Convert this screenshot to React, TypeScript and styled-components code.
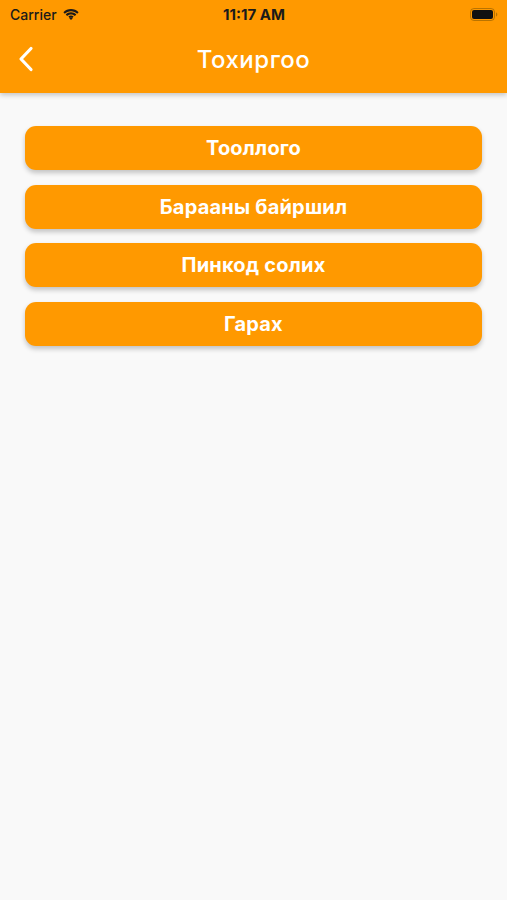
import React from "react";
import styled, { createGlobalStyle } from "styled-components";

const Global = createGlobalStyle`
  html, body { margin: 0; padding: 0; background: #f9f9f9; }
  body { font-family: "Inter", "Liberation Sans", sans-serif; }
`;

const Page = styled.div`
  width: 507px;
  min-height: 900px;
  background: #f9f9f9;
  display: flex;
  flex-direction: column;
`;

const Header = styled.header`
  background: #ff9900;
  height: 93px;
  box-shadow: 0 2px 5px rgba(0, 0, 0, 0.22);
  display: flex;
  flex-direction: column;
  position: relative;
  z-index: 1;
`;

const StatusBar = styled.div`
  height: 28px;
  display: grid;
  grid-template-columns: 1fr auto 1fr;
  align-items: center;
  padding: 0 9px 0 10px;
  color: #1a1a1a;
  font-size: 14px;
`;

const Carrier = styled.div`
  display: flex;
  align-items: center;
  gap: 5px;
  font-weight: 500;
`;

const Time = styled.div`
  font-weight: 700;
  font-size: 15px;
`;

const Right = styled.div`
  display: flex;
  justify-content: flex-end;
`;

const NavBar = styled.div`
  flex: 1;
  display: flex;
  align-items: center;
  justify-content: center;
  position: relative;
  padding-bottom: 3px;
`;

const BackButton = styled.div`
  position: absolute;
  left: 18px;
  top: 17px;
  width: 20px;
  height: 28px;
  display: flex;
  align-items: center;
`;

const Title = styled.h1`
  margin: 0;
  color: #ffffff;
  font-size: 24px;
  font-weight: 500;
  letter-spacing: 0.5px;
`;

const List = styled.main`
  display: flex;
  flex-direction: column;
  gap: 14.5px;
  padding: 33px 25px 0 25px;
`;

const MenuButton = styled.button`
  height: 44px;
  border: none;
  border-radius: 11px;
  background: #ff9900;
  color: #ffffff;
  font-family: "Inter", "Liberation Sans", sans-serif;
  font-size: 20px;
  font-weight: 700;
  letter-spacing: 0.2px;
  box-shadow: 0 3px 5px rgba(0, 0, 0, 0.22);
  display: flex;
  align-items: center;
  justify-content: center;
  padding: 0;
  cursor: pointer;
`;

const Wifi = () => (
  <svg width="18" height="13" viewBox="0 0 17 13">
    <path d="M8.5 3.2c2.4 0 4.6.9 6.2 2.5l1.4-1.5C14.1 2.2 11.4 1 8.5 1S2.9 2.2.9 4.2l1.4 1.5C3.9 4.1 6.1 3.2 8.5 3.2z" fill="#1a1a1a" />
    <path d="M8.5 6.4c1.5 0 2.9.6 3.9 1.6l1.4-1.5C12.4 5.1 10.5 4.3 8.5 4.3S4.6 5.1 3.2 6.5L4.6 8c1-1 2.4-1.6 3.9-1.6z" fill="#1a1a1a" />
    <path d="M8.5 9.5c.7 0 1.3.3 1.7.7L8.5 12 6.8 10.2c.4-.4 1-.7 1.7-.7z" fill="#1a1a1a" />
    <path d="M8.5 7.5c1 0 1.9.4 2.6 1.1l-1.3 1.4c-.3-.4-.8-.6-1.3-.6s-1 .2-1.3.6L5.9 8.6c.7-.7 1.6-1.1 2.6-1.1z" fill="#1a1a1a" />
  </svg>
);

const Battery = () => (
  <svg width="28" height="13" viewBox="0 0 28 13">
    <rect x="0.5" y="0.5" width="24" height="12" rx="3.5" fill="none" stroke="#8a5a00" strokeOpacity="0.6" />
    <rect x="2" y="2" width="21" height="9" rx="2" fill="#111" />
    <path d="M26 4.5v4c.8-.3 1.3-1.1 1.3-2s-.5-1.7-1.3-2z" fill="#8a5a00" fillOpacity="0.6" />
  </svg>
);

const Chevron = () => (
  <svg width="16" height="26" viewBox="0 0 16 26">
    <path d="M13 2.5L3 13l10 10.5" fill="none" stroke="#ffffff" strokeWidth="3.2" strokeLinecap="round" strokeLinejoin="round" />
  </svg>
);

const items = ["Тооллого", "Барааны байршил", "Пинкод солих", "Гарах"];

export default function App() {
  return (
    <Page>
      <Global />
      <Header>
        <StatusBar>
          <Carrier>
            Carrier <Wifi />
          </Carrier>
          <Time>11:17 AM</Time>
          <Right>
            <Battery />
          </Right>
        </StatusBar>
        <NavBar>
          <BackButton>
            <Chevron />
          </BackButton>
          <Title>Тохиргоо</Title>
        </NavBar>
      </Header>
      <List>
        {items.map((t) => (
          <MenuButton key={t}>{t}</MenuButton>
        ))}
      </List>
    </Page>
  );
}
